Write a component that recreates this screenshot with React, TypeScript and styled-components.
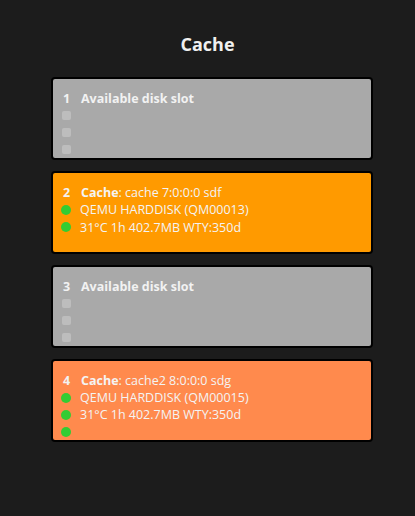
import React from 'react'
import styled, { createGlobalStyle } from 'styled-components'

type Slot = {
	num: number;
	tone: 'empty' | 'cache' | 'cache2';
	name?: string;
	device?: string;
	model?: string;
	stats?: string;
	extraDot?: boolean;
}

const slots: Slot[] = [
	{ num: 1, tone: 'empty' },
	{ num: 2, tone: 'cache', name: 'Cache', device: 'cache 7:0:0:0 sdf', model: 'QEMU HARDDISK (QM00013)', stats: '31°C 1h 402.7MB WTY:350d' },
	{ num: 3, tone: 'empty' },
	{ num: 4, tone: 'cache2', name: 'Cache', device: 'cache2 8:0:0:0 sdg', model: 'QEMU HARDDISK (QM00015)', stats: '31°C 1h 402.7MB WTY:350d', extraDot: true },
]

const tones = {
	empty: '#a9a9a9',
	cache: '#ff9a00',
	cache2: '#ff8a4d',
}

const App = () => {
	return (
		<Page>
			<GlobalStyle />
			<Title>Cache</Title>
			<List>
				{slots.map((s) => (
					<Card key={s.num} tone={s.tone}>
						<Row>
							<Num>{s.num}</Num>
							{s.tone === 'empty'
								? <Label>Available disk slot</Label>
								: <Text><Label>{s.name}</Label>: {s.device}</Text>}
						</Row>
						{s.tone === 'empty' ? (
							<>
								<Row><Square /></Row>
								<Row><Square /></Row>
								<Row><Square /></Row>
							</>
						) : (
							<>
								<Row><Dot /><Text>{s.model}</Text></Row>
								<Row><Dot /><Text>{s.stats}</Text></Row>
								{s.extraDot && <Row><Dot /></Row>}
							</>
						)}
					</Card>
				))}
			</List>
		</Page>
	);
}

const GlobalStyle = createGlobalStyle`
	html, body {
		margin: 0;
		background: #1c1c1c;
	}
	body {
		font-family: "Open Sans", "Noto Sans", sans-serif;
		color: #f2f2f2;
	}
`;

const Page = styled.div`
	width: 415px;
	min-height: 516px;
	padding-top: 32px;
	box-sizing: border-box;
`;

const Title = styled.h1`
	margin: 0 0 21px;
	text-align: center;
	font-size: 18px;
	font-weight: 700;
	line-height: 24px;
	color: #f0f0f0;
`;

const List = styled.div`
	display: flex;
	flex-direction: column;
	gap: 11px;
	padding-left: 51px;
`;

const Card = styled.div<{ tone: Slot['tone'] }>`
	width: 322px;
	height: 83px;
	box-sizing: border-box;
	border: 2px solid #000;
	border-radius: 4px;
	background: ${(p) => tones[p.tone]};
	padding: 11px 9px 0;
	display: flex;
	flex-direction: column;
`;

const Row = styled.div`
	display: flex;
	align-items: center;
	height: 17.3px;
	font-size: 12.5px;
	white-space: nowrap;
`;

const Num = styled.span`
	width: 19px;
	padding-left: 1px;
	font-weight: 700;
	box-sizing: border-box;
`;

const Label = styled.span`
	font-weight: 700;
`;

const Text = styled.span`
	color: #f4f4f4;
`;

const Square = styled.span`
	width: 9px;
	height: 9px;
	border-radius: 2px;
	background: #bdbdbd;
	margin-right: 10px;
`;

const Dot = styled.span`
	width: 10px;
	height: 10px;
	border-radius: 50%;
	background: #33cc33;
	margin-right: 9px;
	margin-left: -1px;
`;

export default App
